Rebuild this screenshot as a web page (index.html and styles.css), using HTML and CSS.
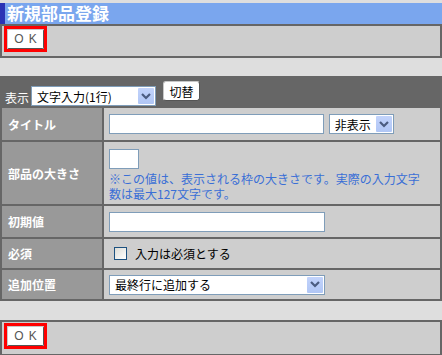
FILE: index.html
```html
<!DOCTYPE html>
<html>
<head>
    <title>新規部品登録</title>
    <link rel="stylesheet" href="styles.css">
</head>
<body>
    <h1 class="title">新規部品登録</h1>
    <div class="okbar">
        <span class="okframe"><button type="button" class="okbtn">OK</button></span>
    </div>

    <table class="parts">
        <tr class="head">
            <td colspan="2">
                <div class="head-in">
                    <span class="head-lab">表示</span>
                    <span class="sel sel-type">
                        <select>
                            <option>文字入力(1行)</option>
                        </select>
                        <span class="arrow"><svg width="10" height="7" viewBox="0 0 10 7"><path d="M1 1 L5 5 L9 1" fill="none" stroke="#4b5c80" stroke-width="2.2"/></svg></span>
                    </span>
                    <button type="button" class="swbtn">切替</button>
                </div>
            </td>
        </tr>
        <tr class="r-title">
            <th>タイトル</th>
            <td>
                <input type="text" class="txt txt-title">
                <span class="sel sel-show">
                    <select>
                        <option>非表示</option>
                    </select>
                    <span class="arrow"><svg width="10" height="7" viewBox="0 0 10 7"><path d="M1 1 L5 5 L9 1" fill="none" stroke="#4b5c80" stroke-width="2.2"/></svg></span>
                </span>
            </td>
        </tr>
        <tr class="r-size">
            <th>部品の大きさ</th>
            <td>
                <input type="text" class="txt txt-size">
                <div class="note">※この値は、表示される枠の大きさです。実際の入力文字数は最大127文字です。</div>
            </td>
        </tr>
        <tr class="r-init">
            <th>初期値</th>
            <td><input type="text" class="txt txt-init"></td>
        </tr>
        <tr class="r-req">
            <th>必須</th>
            <td><label class="chk"><span class="box"></span>入力は必須とする</label></td>
        </tr>
        <tr class="r-pos">
            <th>追加位置</th>
            <td>
                <span class="sel sel-pos">
                    <select>
                        <option>最終行に追加する</option>
                    </select>
                    <span class="arrow"><svg width="10" height="7" viewBox="0 0 10 7"><path d="M1 1 L5 5 L9 1" fill="none" stroke="#4b5c80" stroke-width="2.2"/></svg></span>
                </span>
            </td>
        </tr>
    </table>

    <div class="okbar okbar-bottom">
        <span class="okframe"><button type="button" class="okbtn">OK</button></span>
    </div>
</body>
</html>
```

FILE: styles.css
```css
body {
    margin: 0;
    background-color: #dedede;
    font-family: "Noto Sans CJK JP", "DejaVu Sans", sans-serif;
    font-size: 12px;
    color: #000;
}
.title {
    margin: 3px 0 0 0;
    height: 21px;
    line-height: 20px;
    background-color: #7aa6ee;
    border-left: 5px solid #2b33b5;
    padding-left: 2px;
    color: #fff;
    font-size: 17px;
    font-weight: bold;
}
.okbar {
    height: 30px;
    border: 2px solid #666;
    background-color: #cecece;
    padding: 0 0 0 2px;
}
.okbar-bottom {
    margin-top: 19px;
    height: 31px;
    padding-top: 1px;
}
.okframe {
    display: inline-block;
    border: 3px solid #f00;
    height: 20px;
    vertical-align: top;
}
.okbtn {
    display: block;
    box-sizing: border-box;
    width: 37px;
    height: 20px;
    margin: 0;
    padding: 0;
    background-color: #fff;
    border: 1px solid #c8c8c8;
    border-right-color: #555;
    border-bottom-color: #555;
    border-radius: 2px;
    color: #555;
    font-family: "Liberation Sans", sans-serif;
    font-size: 12px;
    font-weight: normal;
    letter-spacing: 5px;
    text-indent: 5px;
    line-height: 17px;
    text-align: center;
    white-space: nowrap;
}
.parts {
    margin-top: 18px;
    width: 442px;
    border-collapse: collapse;
    border: 2px solid #666;
}
.parts th,
.parts td {
    border: 2px solid #666;
    padding: 0 0 0 5px;
    vertical-align: middle;
}
.parts th {
    width: 94px;
    background-color: #999;
    color: #fff;
    font-weight: bold;
    text-align: left;
    padding-left: 6px;
}
.parts td {
    background-color: #cecece;
}
.head td {
    background-color: #666;
    height: 28px;
    padding: 0 0 0 3px;
    color: #fff;
}
.head-in {
    display: flex;
    align-items: flex-start;
    height: 28px;
}
.head-lab {
    margin-top: 12px;
    line-height: 16px;
}
.r-title td, .r-title th { height: 32px; }
.r-size td, .r-size th { height: 62px; }
.r-init td, .r-init th { height: 31px; }
.r-req td, .r-req th { height: 29px; }
.r-pos td, .r-pos th { height: 29px; }
.sel {
    position: relative;
    display: inline-block;
    vertical-align: middle;
}
.sel select {
    display: block;
    appearance: none;
    -webkit-appearance: none;
    height: 20px;
    margin: 0;
    padding: 0 0 0 5px;
    border: 1px solid #7f9db9;
    background-color: #fff;
    color: #000;
    font-family: "Noto Sans CJK JP", sans-serif;
    font-size: 12px;
    border-radius: 0;
}
.sel .arrow {
    position: absolute;
    top: 2px;
    right: 2px;
    width: 16px;
    height: 16px;
    background: linear-gradient(#c2d3fb, #b0c6f5);
    border-radius: 1px;
    display: flex;
    align-items: center;
    justify-content: center;
    pointer-events: none;
}
.sel-type {
    margin: 8px 0 0 2px;
}
.sel-type select { width: 125px; }
.sel-show select { width: 65px; }
.sel-pos select { width: 216px; }
.sel-show { margin-left: 2px; }
.swbtn {
    margin: 3px 0 0 7px;
    box-sizing: border-box;
    width: 37px;
    height: 20px;
    padding: 0;
    background-color: #fff;
    border: 1px solid #c8c8c8;
    border-right-color: #555;
    border-bottom-color: #555;
    border-radius: 3px;
    font-family: "Noto Sans CJK JP", sans-serif;
    font-size: 12px;
    line-height: 17px;
    color: #000;
}
.txt {
    height: 20px;
    box-sizing: border-box;
    border: 1px solid #7f9db9;
    margin: 0;
    padding: 0 3px;
    vertical-align: middle;
    background-color: #fff;
}
.txt-title { width: 215px; }
.txt-init { width: 216px; }
.txt-size { width: 30px; display: block; margin-top: 4px; }
.note {
    width: 318px;
    color: #3a6fd6;
    line-height: 15px;
    margin-top: 2px;
}
.chk {
    display: flex;
    align-items: center;
    padding-left: 5px;
}
.chk .box {
    width: 11px;
    height: 11px;
    border: 1px solid #1c5180;
    background: linear-gradient(135deg, #dcdcd6, #fff);
    margin-right: 8px;
}
```
